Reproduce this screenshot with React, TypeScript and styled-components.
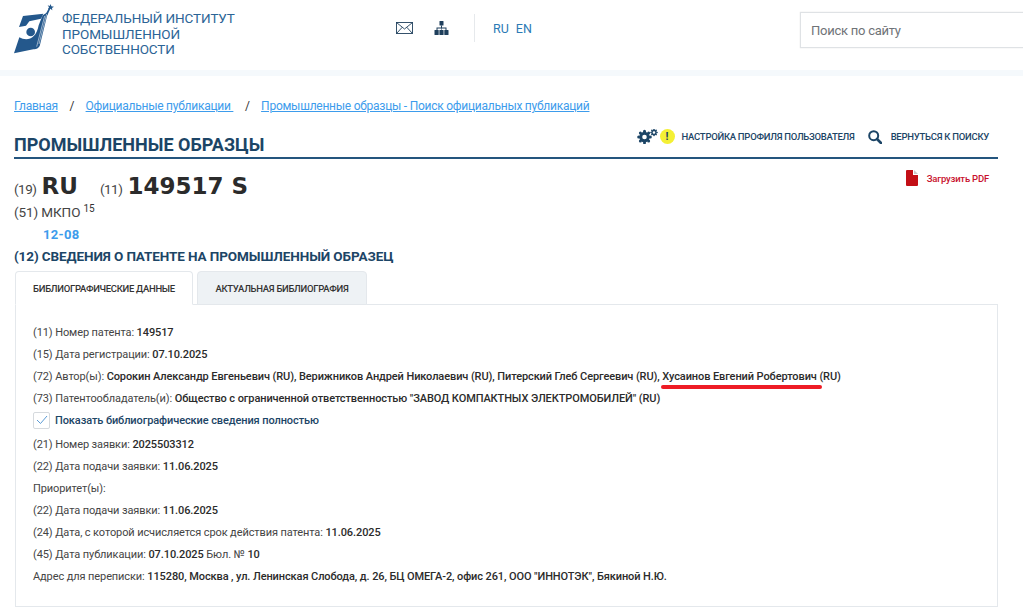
import React from 'react';
import styled, { createGlobalStyle } from 'styled-components';

const GlobalStyle = createGlobalStyle`
  html, body {
    margin: 0;
    padding: 0;
    background: #fff;
  }
  body {
    font-family: Roboto, 'Noto Sans', sans-serif;
    color: #333;
    overflow: hidden;
  }
`;

const Page = styled.div`
  width: 1023px;
  height: 607px;
  overflow: hidden;
`;

const Header = styled.header`
  height: 70px;
  display: flex;
  align-items: flex-start;
`;

const Brand = styled.div`
  width: 381px;
  box-sizing: border-box;
  display: flex;
  padding: 2px 0 0 10px;
  gap: 2px;
`;

const BrandName = styled.div`
  padding-top: 9px;
  font-size: 13.5px;
  line-height: 15.7px;
  letter-spacing: -0.1px;
  color: #2b6496;
`;

const HeaderIcons = styled.div`
  width: 419px;
  box-sizing: border-box;
  display: flex;
  align-items: center;
  padding: 14px 0 0 15px;
  height: 42px;
`;

const IconSlot = styled.span`
  display: flex;
  margin-right: 21px;
  color: #1f3f5c;
`;

const Divider = styled.span`
  width: 1px;
  height: 28px;
  background: #e6e9ec;
  margin: 0 18px 0 4px;
`;

const LangLink = styled.a`
  font-size: 12.5px;
  color: #2b7ab5;
  margin-right: 7px;
`;

const SearchBox = styled.div`
  flex: 1;
  height: 34px;
  margin-top: 12px;
  border: 1px solid #dfe2e5;
  border-right: 0;
  box-shadow: 0 0 1px #d8dadc;
  display: flex;
  align-items: center;
  padding-left: 10px;
  font-size: 13px;
  letter-spacing: -0.25px;
  color: #6f7377;
`;

const Band = styled.div`
  height: 6px;
  background: #f5f9fc;
`;

const Main = styled.main`
  padding: 21px 25px 0 14px;
`;

const Crumbs = styled.nav`
  display: flex;
  align-items: center;
  height: 18px;
  font-size: 12px;
  letter-spacing: -0.25px;
`;

const Crumb = styled.a`
  color: #3d9cec;
  text-decoration: underline;
`;

const CrumbSep = styled.span`
  margin: 0 11.5px;
  color: #333;
`;

const TitleRow = styled.div`
  display: flex;
  align-items: center;
  justify-content: space-between;
  height: 35px;
  margin-top: 7px;
  padding-right: 9px;
  border-bottom: 2px solid #24557e;
`;

const PageTitle = styled.h1`
  margin: 0;
  padding-top: 9px;
  font-size: 18px;
  font-weight: 700;
  color: #1c4566;
`;

const Tools = styled.div`
  display: flex;
  align-items: center;
  margin-top: -6px;
`;

const ToolLink = styled.a`
  display: flex;
  align-items: center;
  font-size: 9.5px;
  font-weight: 500;
  letter-spacing: -0.27px;
  color: #1c4566;
`;

const WarnBadge = styled.span`
  width: 15px;
  height: 15px;
  border-radius: 50%;
  background: #f4f034;
  color: #1c4566;
  font-size: 11px;
  font-weight: 700;
  letter-spacing: 0;
  display: flex;
  align-items: center;
  justify-content: center;
  margin: 0 7px 0 2px;
`;

const SearchTool = styled.span`
  display: flex;
  margin: 0 9px 0 13px;
  color: #1c4566;
`;

const NumberRow = styled.div`
  display: flex;
  justify-content: space-between;
  padding: 14px 9px 0 0;
  height: 27px;
`;

const Codes = styled.div`
  display: flex;
  align-items: baseline;
  font-size: 13.5px;
  letter-spacing: -0.5px;
  color: #444;
`;

const CodeValue = styled.b<{ $gap: number }>`
  font-family: 'DejaVu Sans', sans-serif;
  font-size: 23px;
  font-weight: 700;
  letter-spacing: 0;
  color: #2b2b2b;
  margin: 0 ${({ $gap }) => $gap}px 0 5px;
`;

const PdfLink = styled.a`
  display: flex;
  align-items: center;
  height: 16px;
  margin-top: -3px;
  font-size: 9.5px;
  font-weight: 500;
  letter-spacing: -0.2px;
  color: #c8102e;
  gap: 9px;
`;

const Mkpo = styled.div`
  margin-top: 4px;
  height: 19px;
  font-size: 13.5px;
  letter-spacing: -0.1px;
  color: #444;

  sup {
    font-size: 10px;
    vertical-align: 5px;
    line-height: 0;
    color: #333;
  }
`;

const MkpoClass = styled.div`
  margin: 4px 0 0 29px;
  height: 18px;
  font-size: 13px;
  font-weight: 700;
  letter-spacing: 0.3px;
  color: #3d9cec;
`;

const SectionTitle = styled.h2`
  margin: 1px 0 0;
  font-size: 13.5px;
  font-weight: 700;
  line-height: 20px;
  letter-spacing: -0.1px;
  color: #1c4566;
`;

const TabRow = styled.div`
  display: flex;
  gap: 4px;
  margin: 5px 0 0 1px;
  height: 33px;
`;

const Tab = styled.div<{ $width: number; $active?: boolean }>`
  width: ${({ $width }) => $width}px;
  height: 34px;
  box-sizing: border-box;
  display: flex;
  align-items: center;
  justify-content: center;
  font-size: 9.5px;
  font-weight: 500;
  letter-spacing: -0.3px;
  color: #333;
  border: 1px solid #e4e8ec;
  border-radius: 4px 4px 0 0;
  background: ${({ $active }) => ($active ? '#fff' : '#eef2f5')};
  border-bottom-color: ${({ $active }) => ($active ? '#fff' : '#e4e8ec')};
  position: relative;
  z-index: 1;
`;

const TabPanel = styled.section`
  box-sizing: border-box;
  border: 1px solid #e4e8ec;
  margin: 0 0 0 1px;
  padding: 18px 17px 0;
  height: 303px;
`;

const Line = styled.div`
  height: 22px;
  line-height: 20px;
  font-size: 11px;
  letter-spacing: -0.1px;
  color: #444;
  white-space: nowrap;

  b {
    font-weight: 500;
    color: #2b2b2b;
  }
`;

const Marked = styled.span`
  position: relative;

  &::after {
    content: '';
    position: absolute;
    left: -1px;
    right: -5px;
    bottom: -6px;
    height: 4px;
    border-radius: 2px;
    background: #ee1c25;
  }
`;

const CheckLine = styled.label`
  display: flex;
  align-items: center;
  gap: 5px;
  height: 22px;
  margin: -2px 0 4px;
  font-size: 11px;
  font-weight: 500;
  letter-spacing: -0.1px;
  color: #1c4566;
`;

const CheckBox = styled.span`
  width: 15px;
  height: 15px;
  border: 1px solid #d6dade;
  border-radius: 2px;
  display: flex;
  align-items: center;
  justify-content: center;
`;

const Logo = () => (
  <svg width="50" height="54" viewBox="0 0 150 162" fill="#24588c">
    <path d="M39 42 L100 35 L93 50 L58 58 L48 71 L27 75 Z" />
    <circle cx="62" cy="90" r="13" />
    <path d="M28 106 C48 118 78 115 86 70 L98 40 L114 30 L90 128 C88 138 80 141 70 142 L12 154 Z" />
    <path d="M106 38 L118 16 L122 18 L112 40 Z" />
    <path d="M122 6 L124 13 L132 14 L126 18 L127 25 L121 20 L114 22 L117 16 L113 10 L119 12 Z" />
    <path d="M104 42 L80 134 M110 36 L87 126" stroke="#fff" strokeWidth="1.6" fill="none" />
  </svg>
);

const MailIcon = () => (
  <svg width="17" height="12" viewBox="0 0 17 12" fill="none" stroke="#1f3f5c" strokeWidth="0.9">
    <rect x="0.5" y="0.5" width="16" height="11" />
    <path d="M0.5 0.5 L8.5 7 L16.5 0.5 M0.5 11.5 L6.3 5.2 M16.5 11.5 L10.7 5.2" />
  </svg>
);

const SitemapIcon = () => (
  <svg width="15" height="14" viewBox="0 0 15 14" fill="#1f3f5c">
    <rect x="5.5" y="0" width="4" height="4.5" rx="0.6" />
    <path d="M7 4.5h1v2h4.5v3h-1V7.5h-4v2H7v-2H3.5v2h-1v-3H7z" />
    <rect x="0.5" y="9" width="4.2" height="5" rx="0.6" />
    <rect x="5.4" y="9" width="4.2" height="5" rx="0.6" />
    <rect x="10.3" y="9" width="4.2" height="5" rx="0.6" />
  </svg>
);

const gearTeeth = (cx: number, cy: number, r: number) =>
  Array.from({ length: 8 }, (_, i) => {
    const a = (i * Math.PI) / 4;
    return { x: cx + Math.cos(a) * r, y: cy + Math.sin(a) * r };
  });

const GearsIcon = () => (
  <svg width="21" height="15" viewBox="0 0 21 15">
    {gearTeeth(7.5, 8, 5.8).map((p, i) => (
      <circle key={i} cx={p.x} cy={p.y} r="1.5" fill="#1c4566" />
    ))}
    <circle cx="7.5" cy="8" r="3.8" fill="none" stroke="#1c4566" strokeWidth="3" />
    {gearTeeth(17, 3.5, 3).map((p, i) => (
      <circle key={i} cx={p.x} cy={p.y} r="0.8" fill="#1c4566" />
    ))}
    <circle cx="17" cy="3.5" r="2" fill="none" stroke="#1c4566" strokeWidth="1.4" />
  </svg>
);

const SearchIcon = () => (
  <svg width="14" height="14" viewBox="0 0 14 14" fill="none" stroke="#1c4566">
    <circle cx="5.7" cy="5.7" r="4.5" strokeWidth="2" />
    <path d="M9 9 L13 13" strokeWidth="2.6" strokeLinecap="round" />
  </svg>
);

const PdfIcon = () => (
  <svg width="12" height="16" viewBox="0 0 12 16">
    <path d="M0 1 A1 1 0 0 1 1 0 H7 L7 5 H12 V15 A1 1 0 0 1 11 16 H1 A1 1 0 0 1 0 15 Z" fill="#c30f16" />
    <path d="M8 0 L12 4 H8 Z" fill="#c9c9c9" />
  </svg>
);

const CheckMark = () => (
  <svg width="12" height="10" viewBox="0 0 12 10" fill="none" stroke="#5b9bd5" strokeWidth="1">
    <path d="M1 5 L4.5 8.5 L11 1" />
  </svg>
);

export default function App() {
  return (
    <Page>
      <GlobalStyle />
      <Header>
        <Brand>
          <Logo />
          <BrandName>
            ФЕДЕРАЛЬНЫЙ ИНСТИТУТ
            <br />
            ПРОМЫШЛЕННОЙ
            <br />
            СОБСТВЕННОСТИ
          </BrandName>
        </Brand>
        <HeaderIcons>
          <IconSlot>
            <MailIcon />
          </IconSlot>
          <IconSlot>
            <SitemapIcon />
          </IconSlot>
          <Divider />
          <LangLink>RU</LangLink>
          <LangLink>EN</LangLink>
        </HeaderIcons>
        <SearchBox>Поиск по сайту</SearchBox>
      </Header>
      <Band />
      <Main>
        <Crumbs>
          <Crumb>Главная</Crumb>
          <CrumbSep>/</CrumbSep>
          <Crumb>Официальные публикации&nbsp;</Crumb>
          <CrumbSep>/</CrumbSep>
          <Crumb>Промышленные образцы - Поиск официальных публикаций</Crumb>
        </Crumbs>
        <TitleRow>
          <PageTitle>ПРОМЫШЛЕННЫЕ ОБРАЗЦЫ</PageTitle>
          <Tools>
            <ToolLink>
              <GearsIcon />
              <WarnBadge>!</WarnBadge>
              НАСТРОЙКА ПРОФИЛЯ ПОЛЬЗОВАТЕЛЯ
            </ToolLink>
            <SearchTool>
              <SearchIcon />
            </SearchTool>
            <ToolLink>ВЕРНУТЬСЯ К ПОИСКУ</ToolLink>
          </Tools>
        </TitleRow>
        <NumberRow>
          <Codes>
            (19)
            <CodeValue $gap={22}>RU</CodeValue>
            (11)
            <CodeValue $gap={0}>149517 S</CodeValue>
          </Codes>
          <PdfLink>
            <PdfIcon />
            Загрузить PDF
          </PdfLink>
        </NumberRow>
        <Mkpo>
          (51) МКПО <sup>15</sup>
        </Mkpo>
        <MkpoClass>12-08</MkpoClass>
        <SectionTitle>(12) СВЕДЕНИЯ О ПАТЕНТЕ НА ПРОМЫШЛЕННЫЙ ОБРАЗЕЦ</SectionTitle>
        <TabRow>
          <Tab $width={178} $active>БИБЛИОГРАФИЧЕСКИЕ ДАННЫЕ</Tab>
          <Tab $width={170}>АКТУАЛЬНАЯ БИБЛИОГРАФИЯ</Tab>
        </TabRow>
        <TabPanel>
          <Line>
            (11) Номер патента: <b>149517</b>
          </Line>
          <Line>
            (15) Дата регистрации: <b>07.10.2025</b>
          </Line>
          <Line>
            (72) Автор(ы): <b>Сорокин Александр Евгеньевич (RU), Верижников Андрей Николаевич (RU), Питерский Глеб Сергеевич (RU), <Marked>Хусаинов Евгений Робертович</Marked> (RU)</b>
          </Line>
          <Line>
            (73) Патентообладатель(и): <b>Общество с ограниченной ответственностью "ЗАВОД КОМПАКТНЫХ ЭЛЕКТРОМОБИЛЕЙ" (RU)</b>
          </Line>
          <CheckLine>
            <CheckBox>
              <CheckMark />
            </CheckBox>
            Показать библиографические сведения полностью
          </CheckLine>
          <Line>
            (21) Номер заявки: <b>2025503312</b>
          </Line>
          <Line>
            (22) Дата подачи заявки: <b>11.06.2025</b>
          </Line>
          <Line>Приоритет(ы):</Line>
          <Line>
            (22) Дата подачи заявки: <b>11.06.2025</b>
          </Line>
          <Line>
            (24) Дата, с которой исчисляется срок действия патента: <b>11.06.2025</b>
          </Line>
          <Line>
            (45) Дата публикации: <b>07.10.2025</b> Бюл. № <b>10</b>
          </Line>
          <Line>
            Адрес для переписки: <b>115280, Москва , ул. Ленинская Слобода, д. 26, БЦ ОМЕГА-2, офис 261, ООО "ИННОТЭК", Бякиной Н.Ю.</b>
          </Line>
        </TabPanel>
      </Main>
    </Page>
  );
}
